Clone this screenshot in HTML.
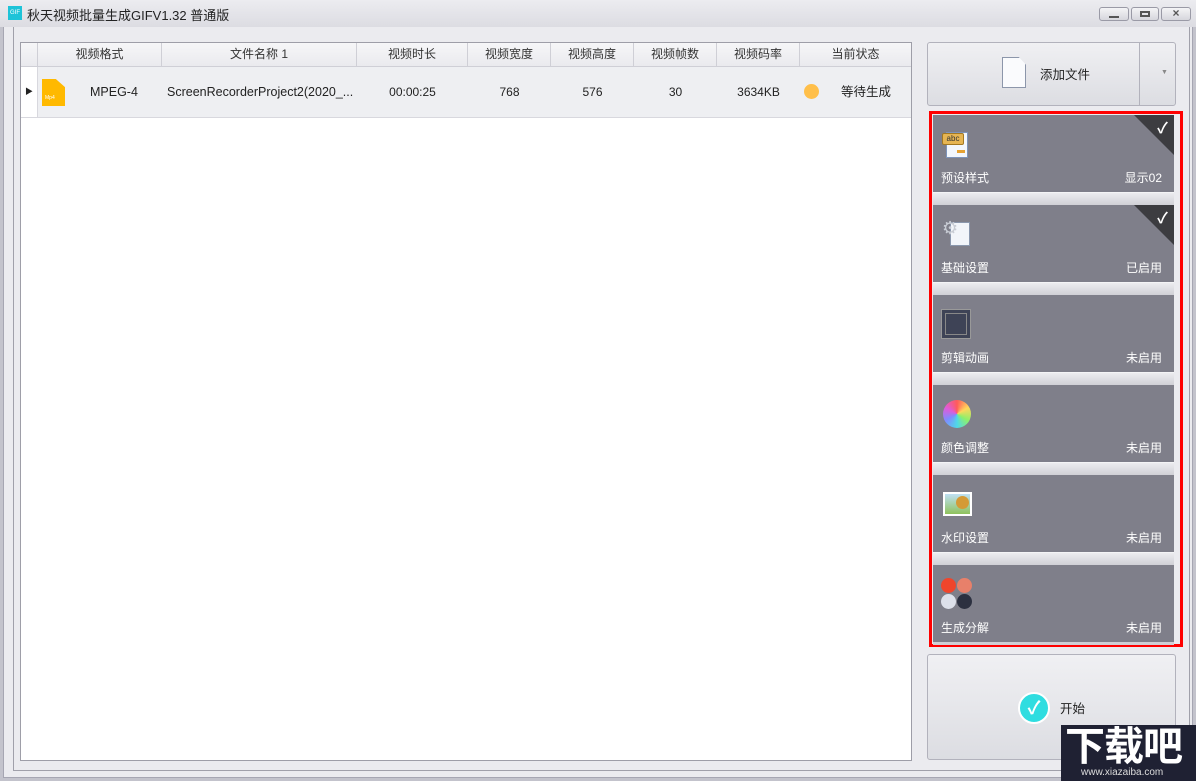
<!DOCTYPE html>
<html><head><meta charset="utf-8"><style>
*{margin:0;padding:0;box-sizing:border-box}
body{width:1196px;height:781px;background:#c3c3cc;position:relative;overflow:hidden;font-family:"Liberation Sans","Noto Sans CJK SC",sans-serif;font-size:12px;color:#222}
.abs{position:absolute}
#win{left:3px;top:0;width:1190px;height:778px;background:#ebebef;border:1px solid #a6a6b2}
#title{left:0;top:0;width:1196px;height:27px;background:linear-gradient(#ececf0,#dcdce2)}
.tb{top:7px;height:14px;border:1px solid #9a9aa6;border-radius:3px;background:linear-gradient(#f4f4f6,#d6d6dc)}
#inner{left:13px;top:27px;width:1177px;height:744px;border:1px solid #a0a0aa;border-top:none;background:#ebebef}
#table{left:20px;top:42px;width:892px;height:719px;background:#fff;border:1px solid #9e9ea8}
.hd{top:0;height:24px;background:linear-gradient(#f6f6f8,#eaeaee);border-right:1px solid #cfcfd6;border-bottom:1px solid #cfcfd6;text-align:center;line-height:23px;font-size:12px;color:#333}
.cell{top:24px;height:51px;background:#eeeff2;border-bottom:1px solid #d8d8de;text-align:center;line-height:50px;font-size:12px;color:#222}
.card{left:933px;width:241px;height:77px;background:#7f7f8a;color:#fff;font-size:12px}
.card .l{position:absolute;left:8px;bottom:6px}
.card .r{position:absolute;right:12px;bottom:6px}
.strip{left:933px;width:241px;height:13px;background:linear-gradient(#ececef,#d0d0d6);border-top:1px solid #f4f4f6}
.corner{right:0;top:0;width:0;height:0;border-top:40px solid #3c3c40;border-left:40px solid transparent}
.ck{right:6px;top:2px;color:#fff;font-size:15px;font-weight:bold}
</style></head><body>
<div id="win" class="abs"></div>
<div id="title" class="abs">
 <div class="abs" style="left:8px;top:6px;width:14px;height:14px;background:#1ec3d8;color:#fff;font-size:6px;line-height:14px;text-align:center">GIF</div>
 <div class="abs" style="left:27px;top:5px;font-size:13px;color:#222">秋天视频批量生成GIFV1.32 普通版</div>
 <div class="abs tb" style="left:1099px;width:30px"><div class="abs" style="left:9px;top:8px;width:10px;height:2px;background:#555"></div></div>
 <div class="abs tb" style="left:1131px;width:28px"><div class="abs" style="left:8px;top:3px;width:10px;height:6px;border:2px solid #555"></div></div>
 <div class="abs tb" style="left:1161px;width:30px;text-align:center;line-height:11px;font-weight:bold;color:#555">×</div>
</div>
<div id="inner" class="abs"></div>
<div id="table" class="abs">
 <div class="abs hd" style="left:0;width:17px"></div>
 <div class="abs hd" style="left:17px;width:124px">视频格式</div>
 <div class="abs hd" style="left:141px;width:195px">文件名称 1</div>
 <div class="abs hd" style="left:336px;width:111px">视频时长</div>
 <div class="abs hd" style="left:447px;width:83px">视频宽度</div>
 <div class="abs hd" style="left:530px;width:83px">视频高度</div>
 <div class="abs hd" style="left:613px;width:83px">视频帧数</div>
 <div class="abs hd" style="left:696px;width:83px">视频码率</div>
 <div class="abs hd" style="left:779px;width:111px;border-right:none">当前状态</div>
 <div class="abs cell" style="left:0;width:17px;background:#fff;border-right:1px solid #d8d8de;font-size:8px">▶</div>
 <div class="abs cell" style="left:17px;width:124px"></div>
 <div class="abs" style="left:21px;top:36px;width:23px;height:27px;background:#ffb900;clip-path:polygon(0 0,60% 0,100% 30%,100% 100%,0 100%)"><span style="position:absolute;left:3px;bottom:5px;font-size:5px;color:#fff">Mp4</span></div>
 <div class="abs" style="left:69px;top:24px;line-height:50px;font-size:12.5px">MPEG-4</div>
 <div class="abs cell" style="left:141px;width:195px;text-align:left;padding-left:5px;font-size:12.5px">ScreenRecorderProject2(2020_...</div>
 <div class="abs cell" style="left:336px;width:111px">00:00:25</div>
 <div class="abs cell" style="left:447px;width:83px">768</div>
 <div class="abs cell" style="left:530px;width:83px">576</div>
 <div class="abs cell" style="left:613px;width:83px">30</div>
 <div class="abs cell" style="left:696px;width:83px">3634KB</div>
 <div class="abs cell" style="left:779px;width:111px"></div>
 <div class="abs" style="left:783px;top:41px;width:15px;height:15px;border-radius:50%;background:#ffbf4a"></div>
 <div class="abs" style="left:820px;top:24px;line-height:50px;font-size:12.5px">等待生成</div>
</div>
<div class="abs" style="left:927px;top:42px;width:249px;height:64px;border:1px solid #b2b2bc;border-radius:3px;background:linear-gradient(#f0f0f3,#dcdde2)">
 <div class="abs" style="left:211px;top:0;width:1px;height:62px;background:#b2b2bc"></div>
 <div class="abs" style="left:233px;top:26px;color:#888;font-size:7px">▼</div>
 <div class="abs" style="left:74px;top:14px;width:24px;height:31px;background:#fafbfd;border:1px solid #8c96aa;clip-path:polygon(0 0,70% 0,100% 25%,100% 100%,0 100%)"></div>
 <div class="abs" style="left:112px;top:21px;font-size:12.5px;color:#222">添加文件</div>
</div>
<div class="abs" style="left:929px;top:111px;width:254px;height:536px;border:3px solid #f00;background:#ebebef"></div>
<div class="abs card" style="top:115px">
 <div class="abs corner"></div><div class="abs ck">✓</div>
 <div class="abs" style="left:13px;top:17px;width:22px;height:26px;background:#f3f7fd;border:1px solid #7d94bb"></div>
 <div class="abs" style="left:9px;top:18px;width:22px;height:12px;background:#e6b553;border:1px solid #a37822;border-radius:2px;font-size:8px;line-height:10px;text-align:center;color:#333">abc</div>
 <div class="abs" style="left:24px;top:35px;width:8px;height:3px;background:#e6a233"></div>
 <span class="l">预设样式</span><span class="r">显示02</span></div>
<div class="abs strip" style="top:192px"></div>
<div class="abs card" style="top:205px">
 <div class="abs corner"></div><div class="abs ck">✓</div>
 <div class="abs" style="left:17px;top:17px;width:20px;height:24px;background:#f2f5fa;border:1px solid #8a97ad"></div>
 <div class="abs" style="left:9px;top:13px;font-size:18px;color:#c8ccd4">⚙</div>
 <span class="l">基础设置</span><span class="r">已启用</span></div>
<div class="abs strip" style="top:282px"></div>
<div class="abs card" style="top:295px">
 <div class="abs" style="left:8px;top:14px;width:30px;height:30px;background:#3e4356;border:1px solid #999"><div class="abs" style="left:3px;top:3px;width:22px;height:22px;border:1px solid #888"></div></div>
 <span class="l">剪辑动画</span><span class="r">未启用</span></div>
<div class="abs strip" style="top:372px"></div>
<div class="abs card" style="top:385px">
 <div class="abs" style="left:10px;top:15px;width:28px;height:28px;border-radius:50%;background:conic-gradient(#ff5b5b,#ffd75b,#8ef06a,#4fd8e8,#7f8cff,#e05bd8,#ff5b5b)"></div>
 <span class="l">颜色调整</span><span class="r">未启用</span></div>
<div class="abs strip" style="top:462px"></div>
<div class="abs card" style="top:475px">
 <div class="abs" style="left:10px;top:17px;width:29px;height:24px;background:linear-gradient(#bfe0f4,#8fc25c);border:2px solid #fff"><div class="abs" style="left:11px;top:2px;width:13px;height:13px;border-radius:50%;background:#d49a36"></div></div>
 <span class="l">水印设置</span><span class="r">未启用</span></div>
<div class="abs strip" style="top:552px"></div>
<div class="abs card" style="top:565px">
 <div class="abs" style="left:8px;top:13px;width:15px;height:15px;border-radius:50%;background:#f0452c"></div>
 <div class="abs" style="left:24px;top:13px;width:15px;height:15px;border-radius:50%;background:#e8806a"></div>
 <div class="abs" style="left:8px;top:29px;width:15px;height:15px;border-radius:50%;background:#dde0ea"></div>
 <div class="abs" style="left:24px;top:29px;width:15px;height:15px;border-radius:50%;background:#2c3040"></div>
 <span class="l">生成分解</span><span class="r">未启用</span></div>
<div class="abs" style="left:933px;top:642px;width:241px;height:3px;background:#d0d0d6"></div>
<div class="abs" style="left:927px;top:654px;width:249px;height:106px;border:1px solid #b2b2bc;border-radius:3px;background:linear-gradient(#f0f0f3,#dcdde2)">
 <div class="abs" style="left:90px;top:37px;width:32px;height:32px;border-radius:50%;background:#2fdde0;border:2px solid #fff;color:#fff;font-size:18px;font-weight:bold;text-align:center;line-height:28px">✓</div>
 <div class="abs" style="left:132px;top:43px;font-size:12.5px">开始</div>
</div>
<div class="abs" style="left:1061px;top:725px;width:135px;height:56px;background:#1f2133;color:#fff">
 <div class="abs" style="left:4px;top:-6px;font-size:40px;font-weight:bold;letter-spacing:-1px;line-height:48px;font-family:'Noto Sans CJK SC',sans-serif">下载吧</div>
 <div class="abs" style="left:20px;top:42px;font-size:10px;color:#ddd">www.xiazaiba.com</div>
</div>
</body></html>
